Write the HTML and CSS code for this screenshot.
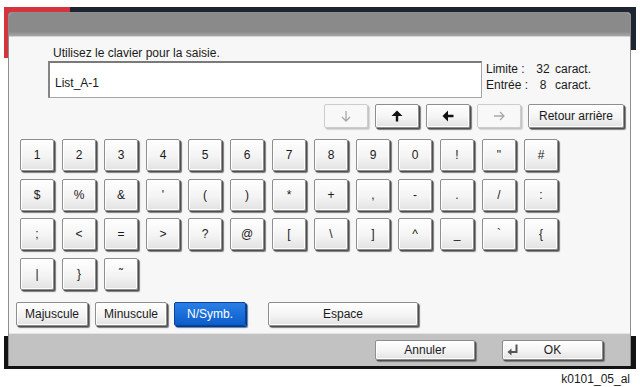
FILE: index.html
```html
<!DOCTYPE html>
<html lang="fr">
<head>
<meta charset="UTF-8">
<title>Clavier</title>
<link rel="stylesheet" href="styles.css">
</head>
<body>

<div class="device">
  <div class="dialog">
    <div class="titlebar"></div>

    <div class="content">
      <p class="prompt">Utilisez le clavier pour la saisie.</p>

      <div class="entry">
        <div class="field">List_A-1</div>
        <div class="counts">
          <div><span class="lbl">Limite :</span><span class="num">32</span>caract.</div>
          <div><span class="lbl">Entrée :</span><span class="num">8</span>caract.</div>
        </div>
      </div>

      <div class="cursor-row">
        <button class="btn arrow off">
          <svg width="12" height="12" viewBox="0 0 12 12"><path d="M6 1V11M2 7L6 11L10 7" fill="none" stroke="#a8a8a8" stroke-width="1.3"/></svg>
        </button>
        <button class="btn arrow">
          <svg width="12" height="12" viewBox="0 0 12 12"><path d="M6 0.5L11.5 6H7.2V11.5H4.8V6H0.5Z" fill="#111"/></svg>
        </button>
        <button class="btn arrow">
          <svg width="12" height="12" viewBox="0 0 12 12"><path d="M0.5 6L6 0.5V4.8H11.5V7.2H6V11.5Z" fill="#111"/></svg>
        </button>
        <button class="btn arrow off">
          <svg width="12" height="12" viewBox="0 0 12 12"><path d="M1 6H11M7 2L11 6L7 10" fill="none" stroke="#a8a8a8" stroke-width="1.3"/></svg>
        </button>
        <button class="btn back">Retour arrière</button>
      </div>

      <div class="keys">
        <div class="row">
          <button class="btn key">1</button><button class="btn key">2</button><button class="btn key">3</button>
          <button class="btn key">4</button><button class="btn key">5</button><button class="btn key">6</button>
          <button class="btn key">7</button><button class="btn key">8</button><button class="btn key">9</button>
          <button class="btn key">0</button><button class="btn key">!</button><button class="btn key">"</button>
          <button class="btn key">#</button>
        </div>
        <div class="row">
          <button class="btn key">$</button><button class="btn key">%</button><button class="btn key">&amp;</button>
          <button class="btn key">'</button><button class="btn key">(</button><button class="btn key">)</button>
          <button class="btn key">*</button><button class="btn key">+</button><button class="btn key">,</button>
          <button class="btn key">-</button><button class="btn key">.</button><button class="btn key">/</button>
          <button class="btn key">:</button>
        </div>
        <div class="row">
          <button class="btn key">;</button><button class="btn key">&lt;</button><button class="btn key">=</button>
          <button class="btn key">&gt;</button><button class="btn key">?</button><button class="btn key">@</button>
          <button class="btn key">[</button><button class="btn key">\</button><button class="btn key">]</button>
          <button class="btn key">^</button><button class="btn key">_</button><button class="btn key">`</button>
          <button class="btn key">{</button>
        </div>
        <div class="row">
          <button class="btn key">|</button><button class="btn key">}</button><button class="btn key">˜</button>
        </div>
      </div>

      <div class="modes">
        <button class="btn mode">Majuscule</button>
        <button class="btn mode">Minuscule</button>
        <button class="btn mode active">N/Symb.</button>
        <button class="btn mode space">Espace</button>
      </div>
    </div>

    <div class="footer">
      <button class="btn foot">Annuler</button>
      <button class="btn foot ok">
        <svg width="12" height="12" viewBox="0 0 12 12"><path d="M9.5 0.5V8H3" fill="none" stroke="#555" stroke-width="2"/><path d="M0.5 8L4.5 4.5V11.5Z" fill="#555"/></svg>
        <span>OK</span>
      </button>
    </div>
  </div>
</div>

<div class="caption">k0101_05_al</div>

</body>
</html>
```

FILE: styles.css
```css
* { box-sizing: border-box; }
body { margin: 0; background: #fff; color: #1a1a1a; font-family: "Liberation Sans", Arial, sans-serif; font-size: 12px; }

/* device frame behind the dialog */
.device {
  width: 632px;
  height: 362px;
  margin: 7px 0 0 4px;
  padding: 5px 5px 3px 4px;
  background:
    linear-gradient(#d4343e, #d4343e) left top / 66px 51px no-repeat,
    linear-gradient(#1e2531, #1e2531) left top / 100% 43px no-repeat,
    linear-gradient(#121212, #121212) left bottom / 100% 33px no-repeat,
    #fff;
}
.dialog {
  height: 100%;
  display: flex;
  flex-direction: column;
  background: #f7f7f7;
  border: 1px solid #8f8f8f;
  border-bottom: 0;
  border-radius: 4px 4px 0 0;
  overflow: hidden;
}
.titlebar { height: 24px; background: linear-gradient(#8a8a8a, #8a8a8a 80%, #a6a6a6); border-bottom: 1px solid #d4d4d4; }

.content { flex: 1; padding: 9px 0 0 7px; }
.prompt { margin: 0 0 1px 37px; line-height: 14px; }

.entry { display: flex; margin-left: 32px; }
.field {
  width: 434px;
  height: 37px;
  padding: 13px 0 0 5px;
  line-height: 14px;
  background: #fff;
  border: 1px solid #a5a5a5;
  border-top: 2px solid #7a7a7a;
  border-left: 2px solid #858585;
}
.counts { margin-left: 4px; line-height: 16px; }
.lbl { display: inline-block; width: 49px; }
.num { display: inline-block; width: 16px; margin-right: 4px; text-align: center; }

/* buttons */
.btn {
  display: flex;
  align-items: center;
  justify-content: center;
  padding: 0;
  font: inherit;
  color: #1a1a1a;
  background: linear-gradient(#ffffff, #f4f4f4 55%, #e2e2e2);
  border: 1px solid #8e8e8e;
  border-radius: 2px;
  box-shadow: inset 0 0 0 1px #fff, 1px 1px 0 #4e4e4e, 2px 2px 1px #7a7a7a;
}
.cursor-row { display: flex; justify-content: flex-end; gap: 7px; margin: 6px 6px 0 0; }
.arrow { width: 44px; height: 24px; }
.arrow.off { border-color: #cdcdcd; background: #f8f8f8; box-shadow: 1px 1px 0 #c4c4c4, 2px 2px 1px #d6d6d6; }
.back { width: 96px; height: 24px; }

.keys { display: flex; flex-direction: column; gap: 7.5px; margin: 11px 0 0 4px; }
.row { display: flex; gap: 8px; }
.key { width: 34px; height: 32px; }

.modes { display: flex; gap: 7px; margin-top: 12px; }
.mode { width: 72px; height: 24px; }
.mode.active { color: #fff; background: linear-gradient(#2a7fe6, #0c5dcb); border-color: #0a4396; box-shadow: 1px 1px 0 #083a80, 2px 2px 1px #5a7fb0; }
.mode.space { width: 150px; margin-left: 15px; }

.footer {
  height: 33px;
  display: flex;
  justify-content: flex-end;
  gap: 27px;
  padding: 6px 27px 0 0;
  background: #c2c2c2;
  border-top: 1px solid #e4e4e4;
}
.foot { width: 100px; height: 20px; }
.ok { width: 101px; justify-content: flex-start; padding-left: 4px; }
.ok span { flex: 1; text-align: center; padding-right: 16px; }

.caption { margin-top: 3px; padding-right: 10px; text-align: right; line-height: 14px; }
```
